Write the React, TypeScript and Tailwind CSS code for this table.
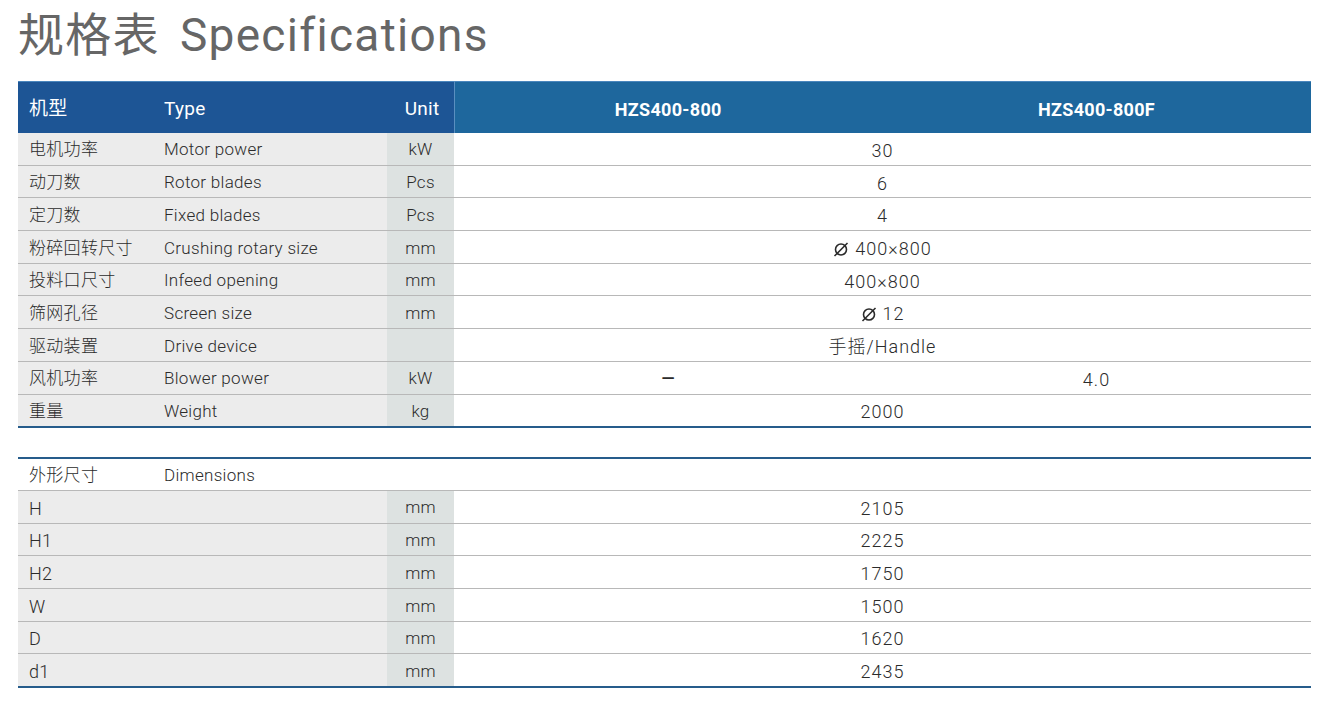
const Dia = () => (
  <svg width="16" height="16" viewBox="0 0 16 16" className="inline-block align-[-2px] mr-[6px]">
    <circle cx="8" cy="8.5" r="5.5" fill="none" stroke="#2b2b2b" strokeWidth="1.6" />
    <line x1="1.5" y1="15" x2="14.5" y2="2" stroke="#2b2b2b" strokeWidth="1.6" />
  </svg>
);

const specs = [
  { cn: "电机功率", en: "Motor power", unit: "kW", value: "30" },
  { cn: "动刀数", en: "Rotor blades", unit: "Pcs", value: "6" },
  { cn: "定刀数", en: "Fixed blades", unit: "Pcs", value: "4" },
  { cn: "粉碎回转尺寸", en: "Crushing rotary size", unit: "mm", value: "400×800", dia: true },
  { cn: "投料口尺寸", en: "Infeed opening", unit: "mm", value: "400×800" },
  { cn: "筛网孔径", en: "Screen size", unit: "mm", value: "12", dia: true },
  { cn: "驱动装置", en: "Drive device", unit: "", value: "手摇/Handle" },
  { cn: "风机功率", en: "Blower power", unit: "kW", value: "", a: "—", b: "4.0" },
  { cn: "重量", en: "Weight", unit: "kg", value: "2000" },
];

const dims = [
  { label: "H", value: "2105" },
  { label: "H1", value: "2225" },
  { label: "H2", value: "1750" },
  { label: "W", value: "1500" },
  { label: "D", value: "1620" },
  { label: "d1", value: "2435" },
];

const font = { fontFamily: 'Roboto, "Noto Sans CJK SC", sans-serif' };

export default function App() {
  return (
    <div className="w-[1335px] h-[707px] bg-white pl-[18px] pr-[24px] pt-[6px] text-[#2b2b2b]" style={font}>
      <h1 className="text-[46px] leading-[58px] text-[#666666] font-normal tracking-[1.3px]">
        规格表<span className="ml-[20px]">Specifications</span>
      </h1>

      <table className="w-full border-collapse mt-[17px] text-[17px] tracking-[0.3px] font-light">
        <colgroup>
          <col className="w-[136px]" />
          <col className="w-[233px]" />
          <col className="w-[67px]" />
          <col className="w-[428px]" />
          <col />
        </colgroup>
        <thead>
          <tr className="h-[51px] text-white text-[19px] border-t border-[#4a86bd]">
            <th className="bg-[#1d5595] text-left font-normal pl-[11px] pt-[4px]">机型</th>
            <th className="bg-[#1d5595] text-left font-normal pl-[10px] pt-[4px]">Type</th>
            <th className="bg-[#1d5595] text-right font-normal pr-[14px] pt-[4px] border-r border-[#5a8fc0]">Unit</th>
            <th className="bg-[#1e679d] font-bold text-[18px] pt-[4px]">HZS400-800</th>
            <th className="bg-[#1e679d] font-bold text-[18px] pt-[4px]">HZS400-800F</th>
          </tr>
        </thead>
        <tbody>
          {specs.map((s, i) => (
            <tr
              key={s.cn}
              className={
                "h-[32.7px] " +
                (i === specs.length - 1 ? "border-b-2 border-[#265c8b]" : "border-b border-[#b8b8b8]")
              }
            >
              <td className="bg-[#ececec] pl-[11px] pt-[3px]">{s.cn}</td>
              <td className="bg-[#ececec] pl-[10px] pt-[3px]">{s.en}</td>
              <td className="bg-[#dde2e1] text-center pt-[3px]">{s.unit}</td>
              {s.a ? (
                <>
                  <td className="text-center font-bold pt-[3px]">{s.a}</td>
                  <td className="text-center pt-[3px] text-[18px] tracking-[1px]">{s.b}</td>
                </>
              ) : (
                <td colSpan={2} className="text-center pt-[3px] text-[18px] tracking-[1px]">
                  {s.dia && <Dia />}
                  {s.value}
                </td>
              )}
            </tr>
          ))}
          <tr className="h-[31px] border-b-2 border-[#265c8b]">
            <td colSpan={5}></td>
          </tr>
          <tr className="h-[32.7px] border-b border-[#b8b8b8]">
            <td className="pl-[11px] pt-[3px]">外形尺寸</td>
            <td className="pl-[10px] pt-[3px]">Dimensions</td>
            <td></td>
            <td colSpan={2}></td>
          </tr>
          {dims.map((d, i) => (
            <tr
              key={d.label}
              className={
                "h-[32.7px] " +
                (i === dims.length - 1 ? "border-b-2 border-[#265c8b]" : "border-b border-[#b8b8b8]")
              }
            >
              <td className="bg-[#ececec] pl-[11px] pt-[3px] text-[18px]">{d.label}</td>
              <td className="bg-[#ececec]"></td>
              <td className="bg-[#dde2e1] text-center pt-[3px]">mm</td>
              <td colSpan={2} className="text-center pt-[3px] text-[18px] tracking-[1px]">
                {d.value}
              </td>
            </tr>
          ))}
        </tbody>
      </table>
    </div>
  );
}
